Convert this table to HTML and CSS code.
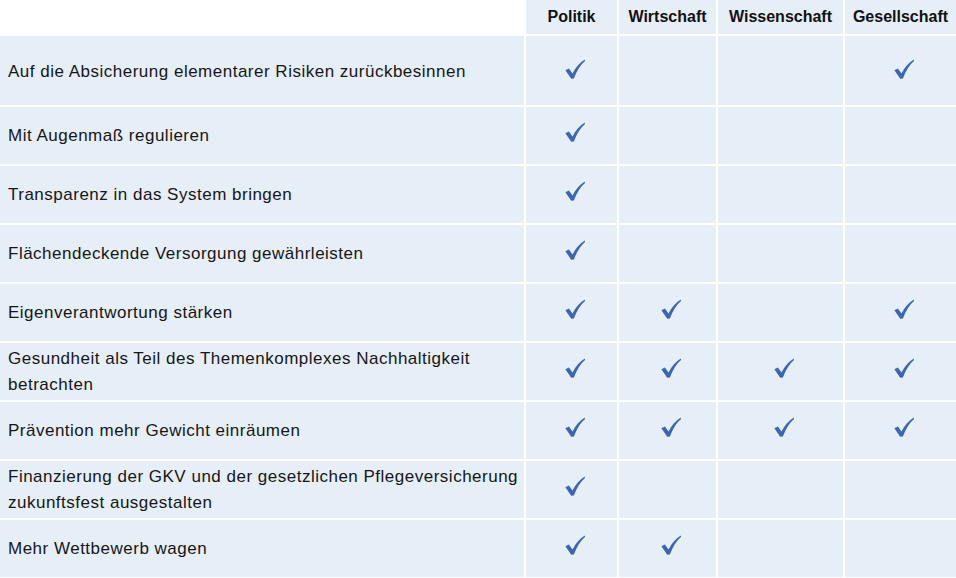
FILE: index.html
```html
<!DOCTYPE html>
<html lang="de">
<head>
<meta charset="utf-8">
<link rel="stylesheet" href="styles.css">
<title>Tabelle</title>
</head>
<body>
<svg width="0" height="0" class="defs">
  <defs>
    <symbol id="chk" viewBox="0 0 20 20">
      <path d="M0.4,11.2 L3.9,9.4 L7.5,14.4 C10.5,8.6 14.5,4 19.8,0.5 L20,1.9 C15.4,5.9 11.9,11.5 8.9,19.4 L6.2,19.7 Z"/>
    </symbol>
  </defs>
</svg>
<div class="table">
  <div class="hcell blank"></div>
  <div class="hcell">Politik</div>
  <div class="hcell">Wirtschaft</div>
  <div class="hcell">Wissenschaft</div>
  <div class="hcell">Gesellschaft</div>

  <div class="cell label tall">Auf die Absicherung elementarer Risiken zurückbesinnen</div>
  <div class="cell mark tall"><svg class="check"><use href="#chk"/></svg></div>
  <div class="cell mark tall"></div>
  <div class="cell mark tall"></div>
  <div class="cell mark tall"><svg class="check"><use href="#chk"/></svg></div>

  <div class="cell label">Mit Augenmaß regulieren</div>
  <div class="cell mark"><svg class="check"><use href="#chk"/></svg></div>
  <div class="cell mark"></div>
  <div class="cell mark"></div>
  <div class="cell mark"></div>

  <div class="cell label">Transparenz in das System bringen</div>
  <div class="cell mark"><svg class="check"><use href="#chk"/></svg></div>
  <div class="cell mark"></div>
  <div class="cell mark"></div>
  <div class="cell mark"></div>

  <div class="cell label">Flächendeckende Versorgung gewährleisten</div>
  <div class="cell mark"><svg class="check"><use href="#chk"/></svg></div>
  <div class="cell mark"></div>
  <div class="cell mark"></div>
  <div class="cell mark"></div>

  <div class="cell label">Eigenverantwortung stärken</div>
  <div class="cell mark"><svg class="check"><use href="#chk"/></svg></div>
  <div class="cell mark"><svg class="check"><use href="#chk"/></svg></div>
  <div class="cell mark"></div>
  <div class="cell mark"><svg class="check"><use href="#chk"/></svg></div>

  <div class="cell label">Gesundheit als Teil des Themenkomplexes Nachhaltigkeit betrachten</div>
  <div class="cell mark"><svg class="check"><use href="#chk"/></svg></div>
  <div class="cell mark"><svg class="check"><use href="#chk"/></svg></div>
  <div class="cell mark"><svg class="check"><use href="#chk"/></svg></div>
  <div class="cell mark"><svg class="check"><use href="#chk"/></svg></div>

  <div class="cell label">Prävention mehr Gewicht einräumen</div>
  <div class="cell mark"><svg class="check"><use href="#chk"/></svg></div>
  <div class="cell mark"><svg class="check"><use href="#chk"/></svg></div>
  <div class="cell mark"><svg class="check"><use href="#chk"/></svg></div>
  <div class="cell mark"><svg class="check"><use href="#chk"/></svg></div>

  <div class="cell label">Finanzierung der GKV und der gesetzlichen Pflegeversicherung zukunftsfest ausgestalten</div>
  <div class="cell mark"><svg class="check"><use href="#chk"/></svg></div>
  <div class="cell mark"></div>
  <div class="cell mark"></div>
  <div class="cell mark"></div>

  <div class="cell label">Mehr Wettbewerb wagen</div>
  <div class="cell mark"><svg class="check"><use href="#chk"/></svg></div>
  <div class="cell mark"><svg class="check"><use href="#chk"/></svg></div>
  <div class="cell mark"></div>
  <div class="cell mark"></div>
</div>
</body>
</html>
```

FILE: styles.css
```css
html, body {
  margin: 0;
  padding: 0;
  background: #ffffff;
  overflow: hidden;
}

body {
  font-family: "Liberation Sans", Arial, Helvetica, sans-serif;
  color: #161616;
}

.defs {
  position: absolute;
  width: 0;
  height: 0;
}

.table {
  display: grid;
  grid-template-columns: 524px 91px 97px 125px 111px;
  grid-auto-rows: 57px;
  grid-template-rows: 34px 69px;
  gap: 2px;
  width: 956px;
  background: #ffffff;
}

.hcell {
  background: #e6eef8;
  display: flex;
  align-items: center;
  justify-content: center;
  font-weight: bold;
  font-size: 16px;
  color: #111111;
  padding-bottom: 1px;
}

.hcell.blank {
  background: #ffffff;
}

.cell {
  background: #e6eef8;
  display: flex;
  align-items: center;
}

.label {
  padding: 0 0 0 8px;
  font-size: 17px;
  letter-spacing: 0.5px;
  line-height: 26px;
}

.mark {
  justify-content: center;
  padding-bottom: 7px;
}

.tall.label {
  padding-top: 2px;
}

.tall.mark {
  padding-bottom: 4px;
}

.check {
  width: 20px;
  height: 20px;
  margin-left: 6px;
  fill: #3e66ae;
}
```
